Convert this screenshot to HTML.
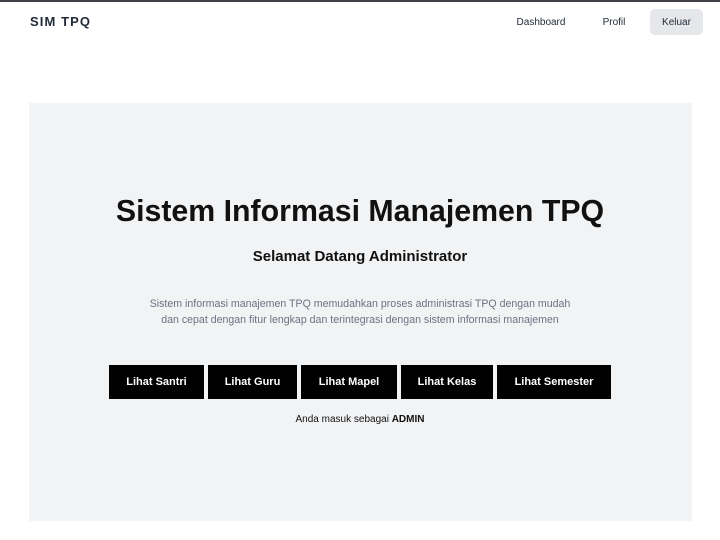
<!DOCTYPE html>
<html><head><style>
*{margin:0;padding:0;box-sizing:border-box}
body{width:720px;height:540px;background:#fff;font-family:"Liberation Sans",sans-serif;position:relative;overflow:hidden}
.top{position:absolute;left:0;top:0;width:720px;height:2px;background:#3f4246}
.logo{position:absolute;left:30px;top:14px;font-size:13px;font-weight:bold;letter-spacing:1.1px;color:#1f2937}
.nav{position:absolute;top:9px;height:26px;line-height:27px;font-size:10px;color:#1f2937;text-align:center}
.panel{position:absolute;left:29px;top:103px;width:663px;height:418px;background:#f2f3f5}
.c{position:absolute;left:0;width:720px;text-align:center}
.btn{position:absolute;top:365px;height:34px;line-height:34px;background:#000;color:#fff;font-size:11px;font-weight:bold;text-align:center}
</style></head><body>
<div class="top"></div>
<div class="logo">SIM TPQ</div>
<div class="nav" style="left:510px;width:62px">Dashboard</div>
<div class="nav" style="left:596px;width:36px">Profil</div>
<div class="nav" style="left:650px;width:53px;background:#e5e7eb;border-radius:5px">Keluar</div>
<div class="panel"></div>
<div class="c" style="top:195px;font-size:30.3px;font-weight:bold;color:#111">Sistem Informasi Manajemen TPQ</div>
<div class="c" style="top:248px;font-size:15px;font-weight:bold;color:#111">Selamat Datang Administrator</div>
<div class="c" style="top:296px;font-size:10.6px;line-height:16px;color:#6b7280">Sistem informasi manajemen TPQ memudahkan proses administrasi TPQ dengan mudah<br>dan cepat dengan fitur lengkap dan terintegrasi dengan sistem informasi manajemen</div>
<div class="btn" style="left:109px;width:95px">Lihat Santri</div>
<div class="btn" style="left:208px;width:89px">Lihat Guru</div>
<div class="btn" style="left:301px;width:96px">Lihat Mapel</div>
<div class="btn" style="left:401px;width:92px">Lihat Kelas</div>
<div class="btn" style="left:497px;width:114px">Lihat Semester</div>
<div class="c" style="top:414px;font-size:10px;color:#111">Anda masuk sebagai <b>ADMIN</b></div>
</body></html>
